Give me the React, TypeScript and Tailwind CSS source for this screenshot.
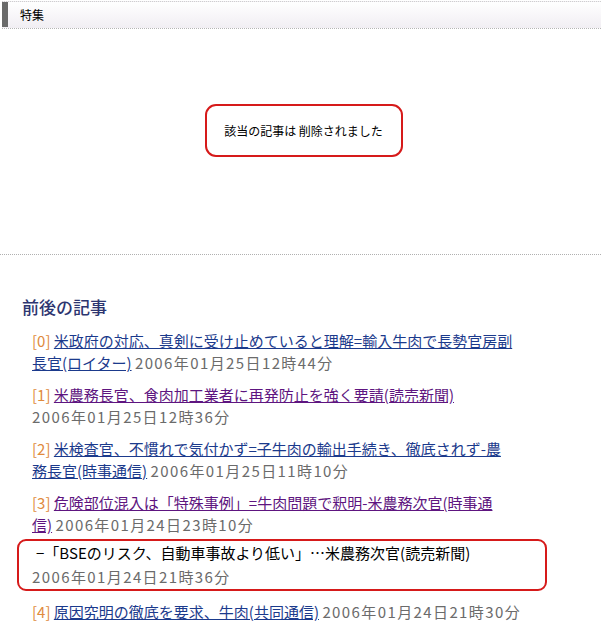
import React from "react";

const font = { fontFamily: '"Noto Sans CJK JP", "Noto Sans", sans-serif' };

type Item = {
  n: number;
  l1: string;
  l2: string;
  date: string;
  visited?: boolean;
};

const items: Item[] = [
  { n: 0, l1: "米政府の対応、真剣に受け止めていると理解=輸入牛肉で長勢官房副", l2: "長官(ロイター)", date: "2006年01月25日12時44分" },
  { n: 1, l1: "米農務長官、食肉加工業者に再発防止を強く要請(読売新聞)", l2: "", date: "2006年01月25日12時36分", visited: true },
  { n: 2, l1: "米検査官、不慣れで気付かず=子牛肉の輸出手続き、徹底されず-農", l2: "務長官(時事通信)", date: "2006年01月25日11時10分" },
  { n: 3, l1: "危険部位混入は「特殊事例」=牛肉問題で釈明-米農務次官(時事通", l2: "信)", date: "2006年01月24日23時10分", visited: true },
];

function Row({ it }: { it: Item }) {
  const linkCls = it.visited ? "text-[#5e1580] underline" : "text-[#1b3a8c] underline";
  return (
    <div className="leading-[22px] whitespace-nowrap">
      <span className="text-[#e08a3c]">[{it.n}]</span>{" "}
      <span className={linkCls}>{it.l1}</span>
      <br />
      {it.l2 ? <span className={linkCls}>{it.l2}</span> : null}
      {it.l2 ? " " : null}
      <span className="text-[#6b6b6b] tracking-[1.4px]">{it.date}</span>
    </div>
  );
}

export default function App() {
  return (
    <div className="w-[601px] h-[634px] bg-white overflow-hidden text-black" style={font}>
      <div className="pt-[1px] pl-[2px]">
        <div className="h-[28px] border-t border-[#cfcfcf] border-b border-dotted border-b-[#b5b5b5] bg-gradient-to-b from-white to-[#f1eef3] flex">
          <div className="w-[6px] bg-[#6a6a6a] mb-[1px]" />
          <div className="pl-[12px] text-[12px] leading-[26px]">特集</div>
        </div>
      </div>

      <div className="flex justify-center pl-[6px] mt-[75px]">
        <div className="w-[198px] h-[53px] border-2 border-[#d61a1a] rounded-[11px] flex items-center justify-center text-[12px] pt-[1px]">
          該当の記事は 削除されました
        </div>
      </div>

      <div className="mt-[97px] border-b border-dotted border-[#b0b0b0]" />

      <div className="pl-[22px] mt-[40px] text-[17px] leading-[24px] text-[#2d3570] font-medium">前後の記事</div>

      <div className="pl-[32px] mt-[11px] text-[15px] flex flex-col gap-[10px]">
        {items.map((it) => (
          <Row key={it.n} it={it} />
        ))}
      </div>

      <div className="mt-[3px] ml-[17px] w-[530px] h-[52px] border-2 border-[#d61a1a] rounded-[9px] pl-[13px] text-[15px] leading-[24px] whitespace-nowrap">
        <div className="pl-[4px]">−「BSEのリスク、自動車事故より低い」…米農務次官(読売新聞)</div>
        <div className="text-[#6b6b6b] tracking-[1.4px]">2006年01月24日21時36分</div>
      </div>

      <div className="pl-[32px] mt-[10px] text-[15px] leading-[22px] whitespace-nowrap">
        <span className="text-[#e08a3c]">[4]</span>{" "}
        <span className="text-[#1b3a8c] underline">原因究明の徹底を要求、牛肉(共同通信)</span>{" "}
        <span className="text-[#6b6b6b] tracking-[1.4px]">2006年01月24日21時30分</span>
      </div>
    </div>
  );
}
